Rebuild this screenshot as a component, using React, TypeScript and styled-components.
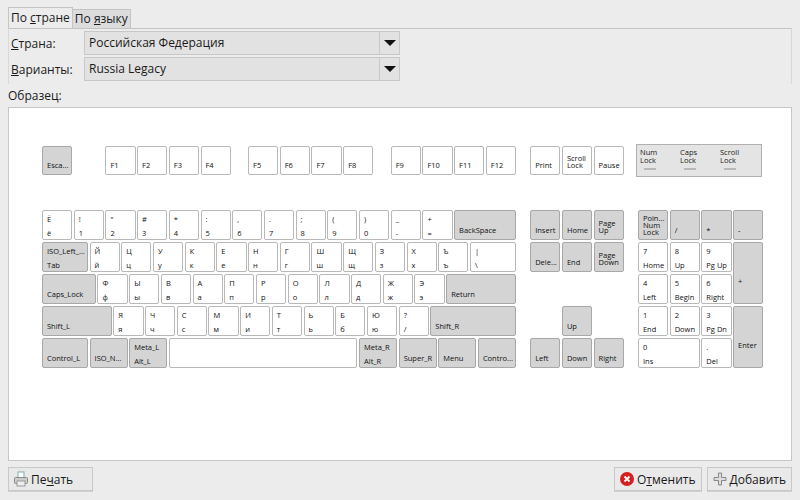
import React from "react";
import styled, { createGlobalStyle } from "styled-components";

const G = createGlobalStyle`
  html,body{margin:0;padding:0;background:#ececec;}
  body{font-family:"Open Sans","Noto Sans",sans-serif;font-size:12px;color:#1a1a1a;}
`;
const Win = styled.div`width:800px;height:500px;box-sizing:border-box;padding:7px 8px 0 8px;display:flex;flex-direction:column;`;
const Tabs = styled.div`display:flex;height:21px;align-items:flex-end;`;
const Tab = styled.div<{ $a?: boolean }>`
  padding:0 2px;height:${p => (p.$a ? 21 : 19)}px;line-height:${p => (p.$a ? 20 : 18)}px;box-sizing:border-box;
  background:${p => (p.$a ? "#ececec" : "#dcdcdc")};border:1px solid #c4c4c4;border-bottom:none;
  ${p => (p.$a ? "" : "margin-left:-1px;")}
`;
const Form = styled.div`border-top:1px solid #c4c4c4;border-left:1px solid #d8d8d8;border-right:1px solid #d8d8d8;padding:2px 0 3px 1px;display:flex;flex-direction:column;gap:2px;`;
const Row = styled.div`display:flex;align-items:center;height:24px;`;
const Lbl = styled.div`width:73px;padding-left:1px;`;
const Combo = styled.div`width:316px;height:24px;box-sizing:border-box;display:flex;border:1px solid #c8c8c8;background:#e2e2e2;`;
const ComboText = styled.div`flex:1;padding-left:4px;line-height:22px;`;
const Arrow = styled.div`width:19px;border-left:1px solid #c8c8c8;display:flex;align-items:center;justify-content:center;`;
const Sample = styled.div`padding:4px 0 3px 0;line-height:16px;`;
const Panel = styled.div`height:354px;box-sizing:border-box;background:#fff;border:1px solid #c8c8c8;padding:36px 0 0 33px;`;
const Canvas = styled.div`position:relative;width:724px;height:226px;`;
const KeyBox = styled.div<{ $g?: boolean }>`
  position:absolute;box-sizing:border-box;border:1px solid ${p => (p.$g ? "#a8a8a8" : "#b8b8b8")};border-radius:2px;
  background:${p => (p.$g ? "#d4d4d4" : "#fff")};font-size:7.5px;line-height:9px;color:#111;
  font-family:"Open Sans","DejaVu Sans",sans-serif;overflow:hidden;white-space:nowrap;
`;
const Two = styled.div`position:absolute;left:4px;top:4px;display:flex;flex-direction:column;gap:5px;`;
const Bot = styled.div`position:absolute;left:4px;bottom:5px;white-space:pre;line-height:7px;`;
const Mid = styled.div`position:absolute;left:4px;top:34px;`;
const Ind = styled.div`position:absolute;left:594px;top:0;width:126px;height:33px;box-sizing:border-box;border:1px solid #b0b0b0;background:#e4e4e4;display:flex;justify-content:space-around;padding:3px 4px 0 0;`;
const IndItem = styled.div`font-size:7.5px;line-height:8px;text-align:left;width:34px;font-family:"Open Sans",sans-serif;display:flex;flex-direction:column;`;
const Led = styled.div`width:12px;height:2px;background:#b8b8b8;margin:4px 0 0 4px;`;
const Footer = styled.div`display:flex;justify-content:space-between;padding-top:6px;`;
const Btns = styled.div`display:flex;gap:5px;`;
const Btn = styled.div`height:24px;box-sizing:border-box;border:1px solid #c8c8c8;background:#e9e9e9;display:flex;align-items:center;gap:2px;padding:0 5px 0 4px;min-width:85px;box-shadow:0 1px 0 #d0d0d0;`;

const U = 31.7;
type K = { x: number; y: number; w?: number; h?: number; g?: boolean; t?: string; b?: string; l?: string; m?: string };
const keys: K[] = [];
const fy = 2, fh = 29;
keys.push({ x: 0, y: 0, g: true, l: "Esca..." });
["F1","F2","F3","F4"].forEach((f, i) => keys.push({ x: 2 + i, y: 0, l: f }));
["F5","F6","F7","F8"].forEach((f, i) => keys.push({ x: 6.5 + i, y: 0, l: f }));
["F9","F10","F11","F12"].forEach((f, i) => keys.push({ x: 11 + i, y: 0, l: f }));
keys.push({ x: 15.4, y: 0, l: "Print" }, { x: 16.4, y: 0, l: "Scroll\nLock" }, { x: 17.4, y: 0, l: "Pause" });
const r1 = [["Ё","ё"],["!","1"],["\"","2"],["#","3"],["*","4"],[":","5"],[",","6"],[".","7"],[";","8"],["(","9"],[")","0"],["_","-"],["+","="]];
r1.forEach((p, i) => keys.push({ x: i, y: 1, t: p[0], b: p[1] }));
keys.push({ x: 13, y: 1, w: 2, g: true, l: "BackSpace" });
keys.push({ x: 0, y: 2, w: 1.5, g: true, t: "ISO_Left_...", b: "Tab" });
"ЙЦУКЕНГШЩЗХЪ".split("").forEach((c, i) => keys.push({ x: 1.5 + i, y: 2, t: c, b: c.toLowerCase() }));
keys.push({ x: 13.5, y: 2, w: 1.5, t: "|", b: "\\" });
keys.push({ x: 0, y: 3, w: 1.75, g: true, l: "Caps_Lock" });
"ФЫВАПРОЛДЖЭ".split("").forEach((c, i) => keys.push({ x: 1.75 + i, y: 3, t: c, b: c.toLowerCase() }));
keys.push({ x: 12.75, y: 3, w: 2.25, g: true, l: "Return" });
keys.push({ x: 0, y: 4, w: 2.25, g: true, l: "Shift_L" });
"ЯЧСМИТЬБЮ".split("").forEach((c, i) => keys.push({ x: 2.25 + i, y: 4, t: c, b: c.toLowerCase() }));
keys.push({ x: 11.25, y: 4, t: "?", b: "/" });
keys.push({ x: 12.25, y: 4, w: 2.75, g: true, l: "Shift_R" });
keys.push({ x: 0, y: 5, w: 1.5, g: true, l: "Control_L" }, { x: 1.5, y: 5, w: 1.25, g: true, l: "ISO_N..." },
  { x: 2.75, y: 5, w: 1.25, g: true, t: "Meta_L", b: "Alt_L" }, { x: 4, y: 5, w: 6 },
  { x: 10, y: 5, w: 1.25, g: true, t: "Meta_R", b: "Alt_R" }, { x: 11.25, y: 5, w: 1.25, g: true, l: "Super_R" },
  { x: 12.5, y: 5, w: 1.25, g: true, l: "Menu" }, { x: 13.75, y: 5, w: 1.25, g: true, l: "Contro..." });
keys.push({ x: 15.4, y: 1, g: true, l: "Insert" }, { x: 16.4, y: 1, g: true, l: "Home" }, { x: 17.4, y: 1, g: true, l: "Page\nUp" },
  { x: 15.4, y: 2, g: true, l: "Dele..." }, { x: 16.4, y: 2, g: true, l: "End" }, { x: 17.4, y: 2, g: true, l: "Page\nDown" },
  { x: 16.4, y: 4, g: true, l: "Up" }, { x: 15.4, y: 5, g: true, l: "Left" }, { x: 16.4, y: 5, g: true, l: "Down" }, { x: 17.4, y: 5, g: true, l: "Right" });
const n = 18.8;
keys.push({ x: n, y: 1, g: true, l: "Poin...\nNum\nLock" }, { x: n + 1, y: 1, g: true, l: "/" }, { x: n + 2, y: 1, g: true, l: "*" }, { x: n + 3, y: 1, g: true, l: "-" },
  { x: n, y: 2, t: "7", b: "Home" }, { x: n + 1, y: 2, t: "8", b: "Up" }, { x: n + 2, y: 2, t: "9", b: "Pg Up" }, { x: n + 3, y: 2, h: 2, g: true, m: "+" },
  { x: n, y: 3, t: "4", b: "Left" }, { x: n + 1, y: 3, t: "5", b: "Begin" }, { x: n + 2, y: 3, t: "6", b: "Right" },
  { x: n, y: 4, t: "1", b: "End" }, { x: n + 1, y: 4, t: "2", b: "Down" }, { x: n + 2, y: 4, t: "3", b: "Pg Dn" }, { x: n + 3, y: 4, h: 2, g: true, m: "Enter" },
  { x: n, y: 5, w: 2, t: "0", b: "Ins" }, { x: n + 2, y: 5, t: ".", b: "Del" });

function Key({ k }: { k: K }) {
  const top = k.y === 0 ? fy : 66 + (k.y - 1) * 32;
  const h = k.y === 0 ? fh : (k.h || 1) * 32 - 2;
  return (
    <KeyBox $g={k.g} style={{ left: k.x * U, top, width: (k.w || 1) * U - 1.5, height: h }}>
      {k.t !== undefined && <Two><span>{k.t}</span><span>{k.b}</span></Two>}
      {k.l && <Bot style={k.l.split("\n").length > 2 ? { bottom: 3 } : undefined}>{k.l}</Bot>}
      {k.m && <Mid>{k.m}</Mid>}
    </KeyBox>
  );
}

const Tri = () => <svg width="12" height="8" viewBox="0 0 12 8"><path d="M0 1h12L6 7z" fill="#111" /></svg>;

export default function App() {
  return (
    <Win>
      <G />
      <Tabs><Tab $a>По <u>с</u>тране</Tab><Tab>По <u>я</u>зыку</Tab></Tabs>
      <Form>
        <Row><Lbl><u>С</u>трана:</Lbl><Combo><ComboText>Российская Федерация</ComboText><Arrow><Tri /></Arrow></Combo></Row>
        <Row><Lbl><u>В</u>арианты:</Lbl><Combo><ComboText>Russia Legacy</ComboText><Arrow><Tri /></Arrow></Combo></Row>
      </Form>
      <Sample>Образец:</Sample>
      <Panel>
        <Canvas>
          {keys.map((k, i) => <Key key={i} k={k} />)}
          <Ind>
            {["Num", "Caps", "Scroll"].map(s => <IndItem key={s}><span>{s}</span><span>Lock</span><Led /></IndItem>)}
          </Ind>
        </Canvas>
      </Panel>
      <Footer>
        <Btn>
          <svg width="16" height="16" viewBox="0 0 16 16"><rect x="5" y="1" width="6" height="6" fill="#fff" stroke="#8aa"/><rect x="1.5" y="6.5" width="13" height="6" rx="1" fill="#ccc" stroke="#888"/><rect x="4" y="10" width="8" height="5" fill="#eee" stroke="#999"/></svg>
          <span>Пе<u>ч</u>ать</span>
        </Btn>
        <Btns>
          <Btn>
            <svg width="16" height="16" viewBox="0 0 16 16"><circle cx="8" cy="8" r="7" fill="#d42020"/><path d="M5.5 5.5l5 5M10.5 5.5l-5 5" stroke="#fff" strokeWidth="1.8"/></svg>
            <span>О<u>т</u>менить</span>
          </Btn>
          <Btn>
            <svg width="16" height="16" viewBox="0 0 16 16"><path d="M6.5 2h3v4.5H14v3H9.5V14h-3V9.5H2v-3h4.5z" fill="#ddd" stroke="#888"/></svg>
            <span><u>Д</u>обавить</span>
          </Btn>
        </Btns>
      </Footer>
    </Win>
  );
}
